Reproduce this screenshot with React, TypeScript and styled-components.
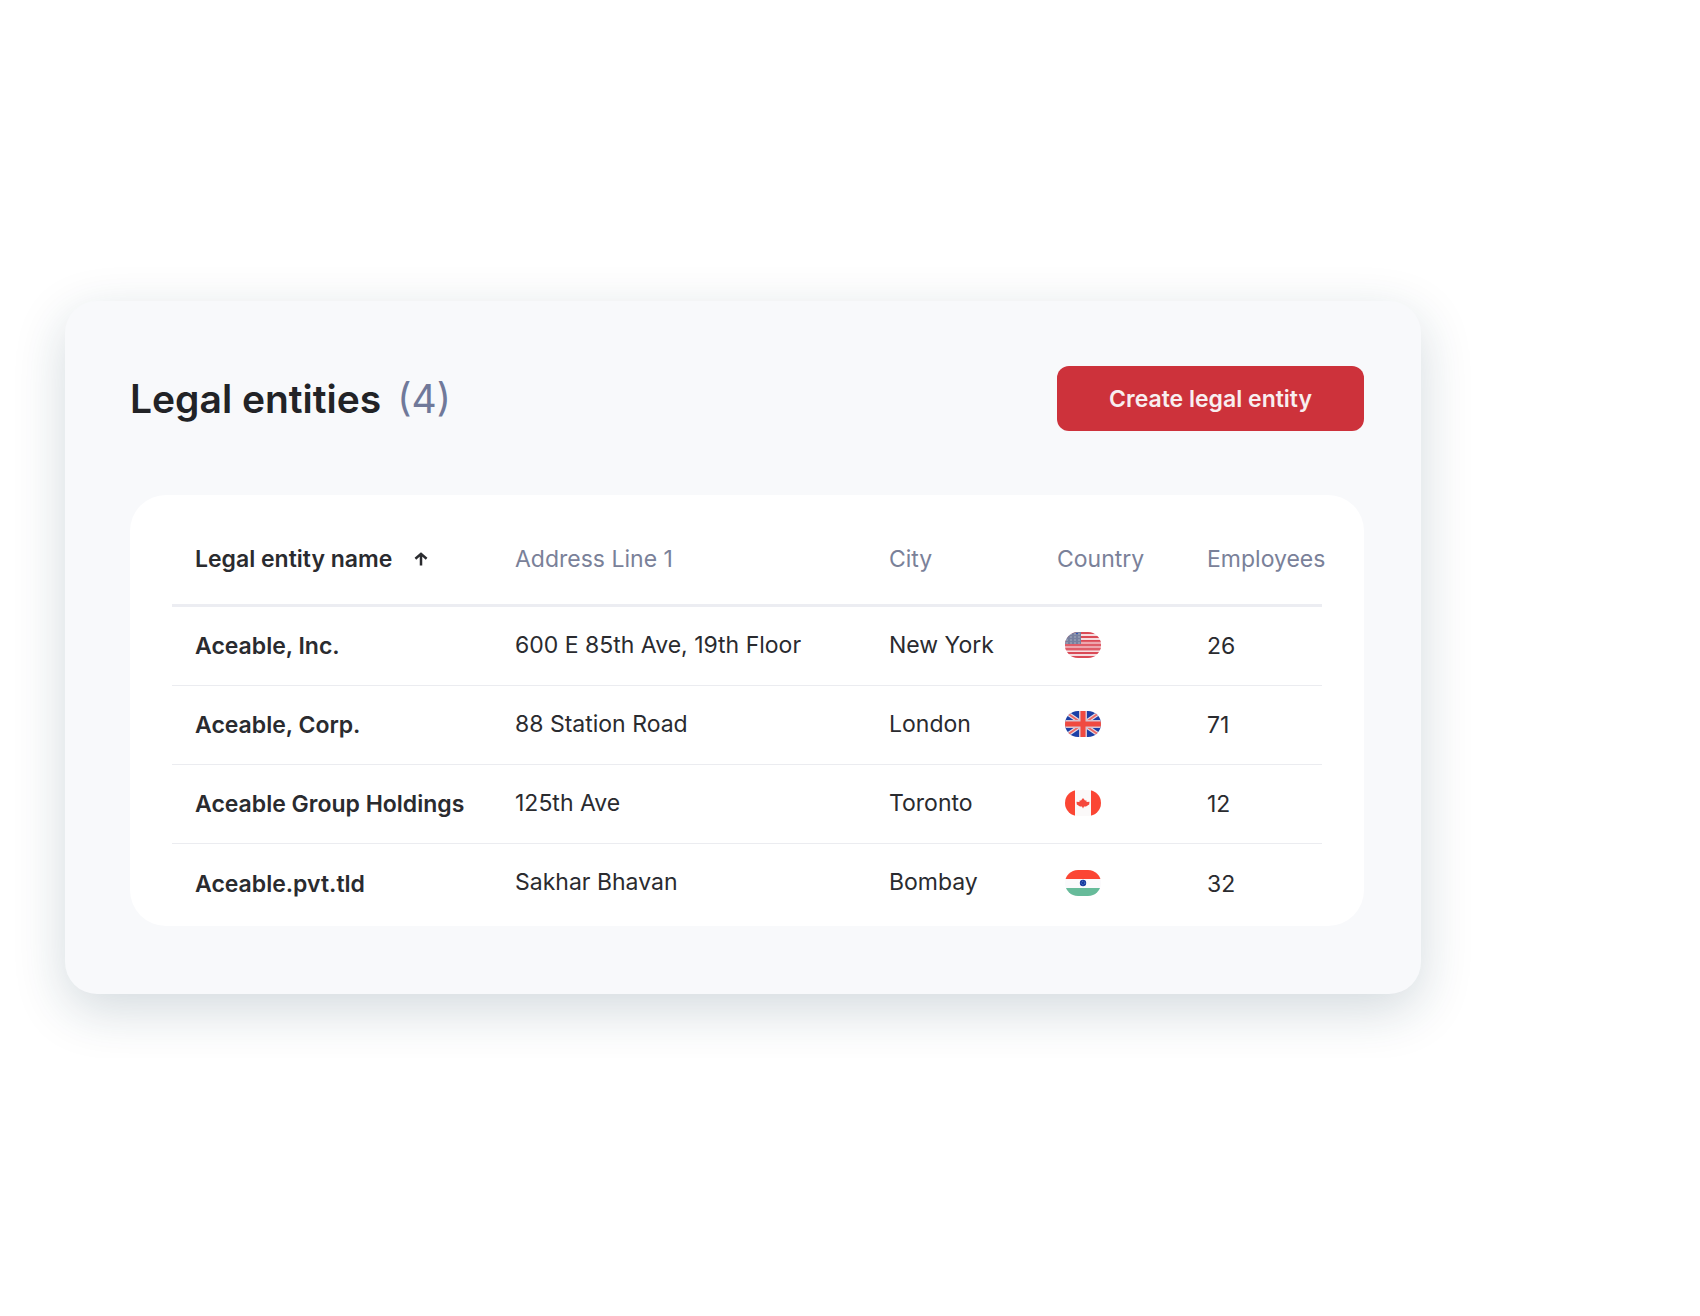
import React from "react";
import styled, { createGlobalStyle, css } from "styled-components";

const GlobalStyle = createGlobalStyle`
  *, *::before, *::after { box-sizing: border-box; }
  body {
    margin: 0;
    background: #ffffff;
    color: #2a2b2f;
    font-family: Inter, "Liberation Sans", sans-serif;
    -webkit-font-smoothing: antialiased;
  }
`;

const Page = styled.main`
  padding: 301px 279px 64px 65px;
`;

const Card = styled.section`
  padding: 65px 57px 68px 65px;
  border-radius: 32px;
  background: #f8f9fb;
  box-shadow: 0 16px 52px rgba(20, 58, 78, 0.19);
`;

const CardHeader = styled.header`
  display: flex;
  align-items: center;
  justify-content: space-between;
  margin-bottom: 64px;
`;

const Title = styled.h1`
  margin: 0;
  font-size: 39px;
  line-height: 48px;
  font-weight: 600;
  color: #222326;
`;

const Count = styled.span`
  margin-left: 16px;
  font-weight: 400;
  color: #70799a;
`;

const PrimaryButton = styled.button`
  height: 65px;
  padding: 0 52px;
  border: 0;
  border-radius: 12px;
  background: #cd323b;
  color: #f8eef0;
  font: 600 23px/32px Inter, "Liberation Sans", sans-serif;
  white-space: nowrap;
  cursor: pointer;
`;

const Panel = styled.div`
  padding: 20px 42px 3px;
  border-radius: 36px;
  background: #ffffff;
`;

const Table = styled.table`
  width: 100%;
  table-layout: fixed;
  border-collapse: separate;
  border-spacing: 0;
  font-size: 23px;
  line-height: 32px;
`;

const Col = styled.col<{ $width: string }>`
  width: ${(p) => p.$width};
`;

const cell = css`
  padding: 0;
  text-align: left;
  vertical-align: middle;
  white-space: nowrap;
`;

const HeadCell = styled.th`
  ${cell}
  height: 92px;
  padding-bottom: 2px;
  border-bottom: 3px solid #ecedf2;
  font-weight: 400;
  color: #7a8199;

  &:first-child { padding-left: 23px; }
`;

const SortButton = styled.button`
  display: flex;
  align-items: center;
  gap: 22px;
  padding: 0;
  border: 0;
  background: none;
  color: #2a2b2f;
  font: inherit;
  font-weight: 600;
  cursor: pointer;
`;

const Row = styled.tr`
  height: 79px;

  &:not(:last-child) > * { border-bottom: 1px solid #ebecf0; }
`;

const NameCell = styled.th`
  ${cell}
  padding-left: 23px;
  font-weight: 600;
`;

const Cell = styled.td`
  ${cell}
`;

const TextCell = styled(Cell)`
  padding-bottom: 3px;
`;

const FlagCell = styled(Cell)`
  padding: 0 0 2px 8px;
`;

const Flag = styled.svg`
  display: block;
  width: 36px;
  height: 26px;
  border-radius: 13px;
`;

type Country = "United States" | "United Kingdom" | "Canada" | "India";

const flagArt: Record<Country, React.ReactNode> = {
  "United States": (
    <>
      <rect width="36" height="26" fill="#f6dde0" />
      {[0, 4, 8, 12, 16, 20, 24].map((y) => (
        <rect key={y} y={y} width="36" height="2" fill="#da4a56" />
      ))}
      <rect y="9" width="36" height="10" fill="#e4707c" opacity="0.5" />
      <rect width="16" height="12" fill="#77809f" />
      {[2, 5, 8, 11].map((y) =>
        [2, 6, 10, 14].map((x) => (
          <circle key={`${x}-${y}`} cx={x} cy={y} r="0.7" fill="#b9bfce" />
        ))
      )}
      <rect x="11" y="1" width="2" height="1" fill="#2f55b8" />
    </>
  ),
  "United Kingdom": (
    <>
      <rect width="36" height="26" fill="#1b3fa6" />
      <path d="M2 2L34 24M34 2L2 24" stroke="#e6dde6" strokeWidth="4" />
      <path d="M2 2L34 24M34 2L2 24" stroke="#ec6a66" strokeWidth="2" />
      <path d="M18 0V26M0 13H36" stroke="#d9c3cf" strokeWidth="8" />
      <path d="M18 0V26M0 13H36" stroke="#f04a40" strokeWidth="5" />
    </>
  ),
  Canada: (
    <>
      <rect width="36" height="26" fill="#fbf9f9" />
      <rect width="10" height="26" fill="#fb4634" />
      <rect x="26" width="10" height="26" fill="#fb4634" />
      <path
        d="M18 8L20 10.5L21.5 10.4L21.5 12L24.5 11.8L24.2 14.4L21 16.4H19L18 18.4L17 16.4H15L11.8 14.4L11.5 11.8L14.5 12L14.5 10.4L16 10.5Z"
        fill="#f5483c"
      />
    </>
  ),
  India: (
    <>
      <rect width="36" height="26" fill="#fbfafc" />
      <rect width="36" height="9" fill="#fb4634" />
      <rect y="18" width="36" height="8" fill="#67bb9a" />
      <circle cx="18" cy="13" r="3.2" fill="#17389f" />
      <circle cx="18" cy="13" r="1.8" fill="none" stroke="#6fa6d8" strokeWidth="0.8" strokeDasharray="1 1.2" />
    </>
  ),
};

const entities: {
  name: string;
  address: string;
  city: string;
  country: Country;
  employees: number;
}[] = [
  { name: "Aceable, Inc.", address: "600 E 85th Ave, 19th Floor", city: "New York", country: "United States", employees: 26 },
  { name: "Aceable, Corp.", address: "88 Station Road", city: "London", country: "United Kingdom", employees: 71 },
  { name: "Aceable Group Holdings", address: "125th Ave", city: "Toronto", country: "Canada", employees: 12 },
  { name: "Aceable.pvt.tld", address: "Sakhar Bhavan", city: "Bombay", country: "India", employees: 32 },
];

const columnWidths = ["343px", "auto", "168px", "150px", "115px"];

export default function App() {
  return (
    <>
      <GlobalStyle />
      <Page>
        <Card>
          <CardHeader>
            <Title>
              Legal entities
              <Count>({entities.length})</Count>
            </Title>
            <PrimaryButton type="button">Create legal entity</PrimaryButton>
          </CardHeader>
          <Panel>
            <Table>
              <colgroup>
                {columnWidths.map((width, i) => (
                  <Col key={i} $width={width} />
                ))}
              </colgroup>
              <thead>
                <tr>
                  <HeadCell scope="col" aria-sort="ascending">
                    <SortButton type="button">
                      Legal entity name
                      <svg width="14" height="14" viewBox="0 0 14 14" fill="none" stroke="currentColor" strokeWidth="2.5" aria-hidden="true">
                        <path d="M7 13.5V2M1.4 6.8L7 1.9L12.6 6.8" />
                      </svg>
                    </SortButton>
                  </HeadCell>
                  <HeadCell scope="col">Address Line 1</HeadCell>
                  <HeadCell scope="col">City</HeadCell>
                  <HeadCell scope="col">Country</HeadCell>
                  <HeadCell scope="col">Employees</HeadCell>
                </tr>
              </thead>
              <tbody>
                {entities.map((entity) => (
                  <Row key={entity.name}>
                    <NameCell scope="row">{entity.name}</NameCell>
                    <TextCell>{entity.address}</TextCell>
                    <TextCell>{entity.city}</TextCell>
                    <FlagCell>
                      <Flag viewBox="0 0 36 26" role="img" aria-label={entity.country}>
                        {flagArt[entity.country]}
                      </Flag>
                    </FlagCell>
                    <Cell>{entity.employees}</Cell>
                  </Row>
                ))}
              </tbody>
            </Table>
          </Panel>
        </Card>
      </Page>
    </>
  );
}
